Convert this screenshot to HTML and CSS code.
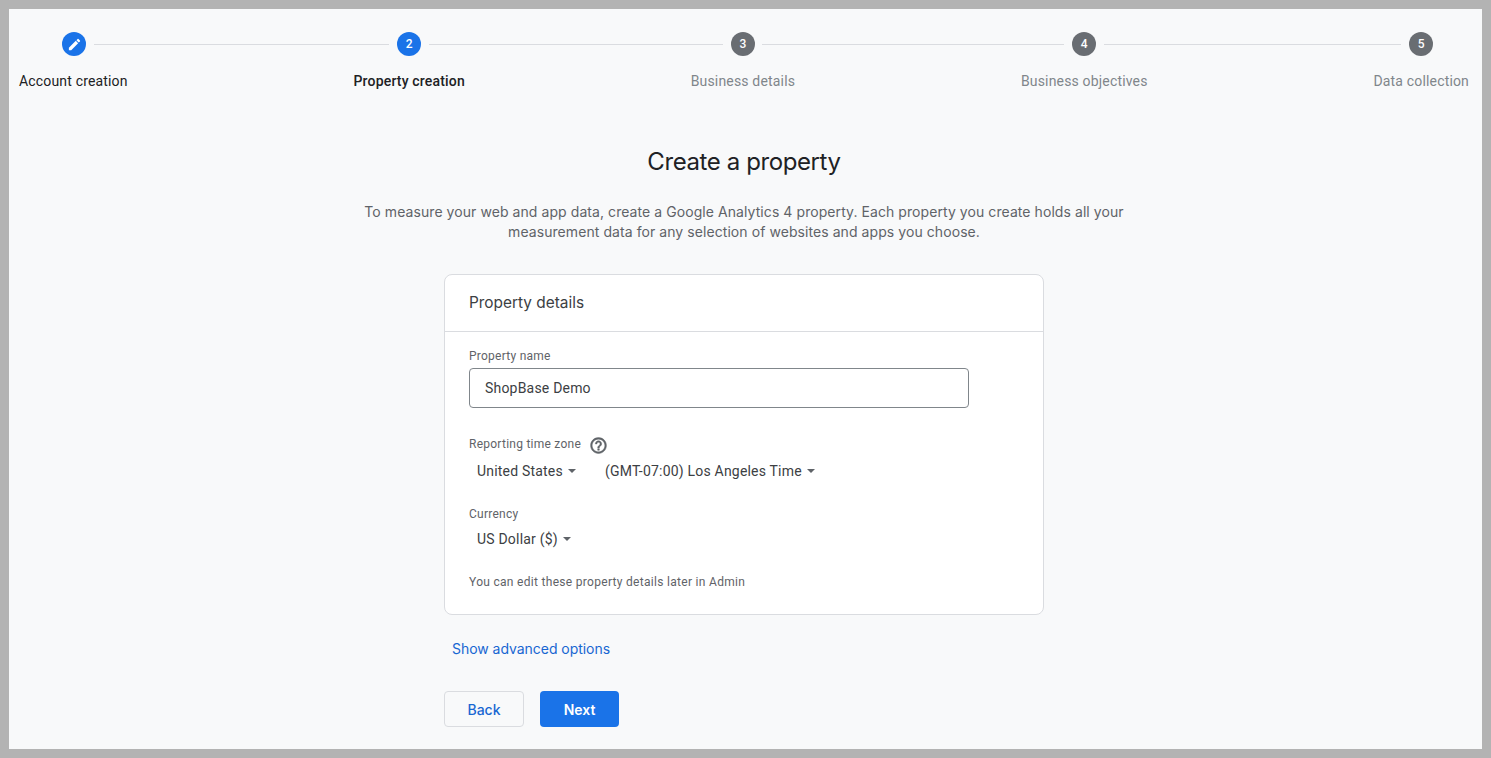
FILE: index.html
```html
<!DOCTYPE html>
<html lang="en">
<head>
<meta charset="utf-8">
<title>Create a property</title>
<link rel="stylesheet" href="styles.css">
</head>
<body>
<main class="frame">
  <nav class="stepper">
    <div class="step step-done">
      <span class="dot dot-blue">
        <svg class="pencil" viewBox="0 0 24 24" width="15" height="15"><path fill="#fff" d="M3 17.25V21h3.75L17.81 9.94l-3.75-3.75L3 17.25zM20.71 7.04a1 1 0 0 0 0-1.41l-2.34-2.34a1 1 0 0 0-1.41 0l-1.83 1.83 3.75 3.75 1.83-1.83z"/></svg>
      </span>
      <span class="step-label">Account creation</span>
    </div>
    <div class="link"><div class="line line-1"></div></div>
    <div class="step step-active">
      <span class="dot dot-blue">2</span>
      <span class="step-label">Property creation</span>
    </div>
    <div class="link"><div class="line line-2"></div></div>
    <div class="step step-todo">
      <span class="dot dot-grey">3</span>
      <span class="step-label">Business details</span>
    </div>
    <div class="link"><div class="line line-3"></div></div>
    <div class="step step-todo">
      <span class="dot dot-grey">4</span>
      <span class="step-label">Business objectives</span>
    </div>
    <div class="link"><div class="line line-4"></div></div>
    <div class="step step-todo">
      <span class="dot dot-grey">5</span>
      <span class="step-label">Data collection</span>
    </div>
  </nav>

  <section class="intro">
    <h1 class="title">Create a property</h1>
    <p class="lead">To measure your web and app data, create a Google Analytics 4 property. Each property you create holds all your measurement data for any selection of websites and apps you choose.</p>
  </section>

  <div class="column">
    <section class="card">
      <h2 class="card-title">Property details</h2>
      <div class="card-body">
        <label class="field-label">Property name</label>
        <div class="input">ShopBase Demo</div>

        <div class="field-label label-zone">Reporting time zone
          <svg class="help" viewBox="0 0 24 24" width="19" height="19"><path fill="#5f6368" stroke="#5f6368" stroke-width=".6" d="M11 18h2v-2h-2v2zm1-16C6.48 2 2 6.48 2 12s4.48 10 10 10 10-4.48 10-10S17.52 2 12 2zm0 18c-4.41 0-8-3.59-8-8s3.59-8 8-8 8 3.59 8 8-3.59 8-8 8zm0-14c-2.21 0-4 1.79-4 4h2c0-1.1.9-2 2-2s2 .9 2 2c0 2-3 1.75-3 5h2c0-2.25 3-2.5 3-5 0-2.21-1.79-4-4-4z"/></svg>
        </div>
        <div class="selects">
          <span class="select select-country">United States<i class="caret"></i></span>
          <span class="select">(GMT-07:00) Los Angeles Time<i class="caret"></i></span>
        </div>

        <div class="field-label label-currency">Currency</div>
        <div class="selects selects-tight">
          <span class="select">US Dollar ($)<i class="caret"></i></span>
        </div>

        <p class="hint">You can edit these property details later in Admin</p>
      </div>
    </section>

    <a class="advanced" href="#">Show advanced options</a>

    <div class="actions">
      <button class="btn btn-back" type="button">Back</button>
      <button class="btn btn-next" type="button">Next</button>
    </div>
  </div>
</main>
</body>
</html>
```

FILE: styles.css
```css
* { box-sizing: border-box; }
html, body { height: 100%; }
body {
  margin: 0;
  background: #b3b3b3;
  padding: 9px;
  font-family: Roboto, "Liberation Sans", sans-serif;
  color: #3c4043;
  overflow: hidden;
}
.frame {
  height: 740px;
  background: #f8f9fa;
  padding: 23px 13px 0 10px;
  display: flex;
  flex-direction: column;
  align-items: stretch;
}
.stepper { display: flex; align-items: flex-start; }
.step { display: flex; flex-direction: column; align-items: center; flex: none; }
.dot {
  width: 24px;
  height: 24px;
  border-radius: 50%;
  color: #fff;
  font-size: 12px;
  font-weight: 500;
  display: flex;
  align-items: center;
  justify-content: center;
}
.dot-blue { background: #1a73e8; }
.dot-grey { background: #5f6368; opacity: .93; }
.step-done .dot { margin-left: 2px; }
.step-label { margin-top: 15px; font-size: 14px; line-height: 20px; white-space: nowrap; letter-spacing: .17px; }
.step-done .step-label { color: #202124; }
.step-active .step-label { color: #202124; font-weight: 500; }
.step-todo .step-label { color: #80868b; }
.link { flex: 1; margin-top: 12px; }
.line { height: 1px; background: #dadce0; }
.line-1 { margin: 0 -35px 0 -34px; }
.line-2 { margin: 0 -32px 0 -36px; }
.line-3 { margin: 0 -43px 0 -33px; }
.line-4 { margin: 0 -28px 0 -44px; }

.intro { width: 780px; align-self: center; text-align: center; }
.title {
  margin: 55px 0 0;
  font-family: Inter, sans-serif;
  font-size: 24px;
  line-height: 32px;
  font-weight: 400;
  letter-spacing: -.4px;
  color: #202124;
}
.lead {
  margin: 24px 0 0;
  font-family: Inter, sans-serif;
  font-size: 14px;
  line-height: 20px;
  letter-spacing: .07px;
  color: #5f6368;
}
.column { width: 600px; align-self: center; margin-top: 32px; }
.card {
  background: #fff;
  border: 1px solid #dadce0;
  border-radius: 8px;
  height: 341px;
}
.card-title {
  margin: 0;
  height: 57px;
  padding: 0 24px 2px;
  display: flex;
  align-items: center;
  font-family: Inter, sans-serif;
  font-size: 15.4px;
  font-weight: 400;
  color: #3c4043;
  border-bottom: 1px solid #dadce0;
}
.card-body { padding: 16px 24px 0; }
.field-label { display: flex; align-items: center; font-size: 12px; line-height: 16px; color: #5f6368; letter-spacing: .25px; }
.input {
  width: 500px;
  height: 40px;
  margin-top: 4px;
  padding: 0 15px;
  display: flex;
  align-items: center;
  border: 1px solid #80868b;
  border-radius: 4px;
  font-size: 14px;
  color: #3c4043;
  letter-spacing: .2px;
}
.label-zone { margin-top: 27px; height: 18px; }
.help { margin-left: 8px; margin-top: 3px; flex: none; }
.selects { display: flex; margin-top: 8px; padding-left: 8px; }
.selects-tight { margin-top: 7px; }
.select { display: inline-flex; align-items: center; font-size: 14px; line-height: 20px; color: #3c4043; letter-spacing: .2px; }
.select-country { margin-right: 29px; }
.caret {
  margin-left: 5px;
  width: 0;
  height: 0;
  border-left: 4px solid transparent;
  border-right: 4px solid transparent;
  border-top: 4px solid #5f6368;
}
.label-currency { margin-top: 25px; }
.hint { margin: 25px 0 0; font-size: 12px; line-height: 16px; color: #5f6368; letter-spacing: .3px; }
.advanced {
  display: block;
  margin: 24px 0 0 8px;
  font-family: Inter, sans-serif;
  font-size: 14px;
  line-height: 20px;
  letter-spacing: -.04px;
  color: #1967d2;
  text-decoration: none;
}
.actions { display: flex; gap: 16px; margin-top: 32px; }
.btn {
  height: 36px;
  border-radius: 4px;
  font-family: Inter, sans-serif;
  font-size: 14px;
  font-weight: 500;
  padding: 0;
}
.btn-back { width: 80px; background: transparent; border: 1px solid #dadce0; color: #1967d2; }
.btn-next { width: 79px; background: #1a73e8; border: 0; color: #fff; font-weight: 600; }
```
